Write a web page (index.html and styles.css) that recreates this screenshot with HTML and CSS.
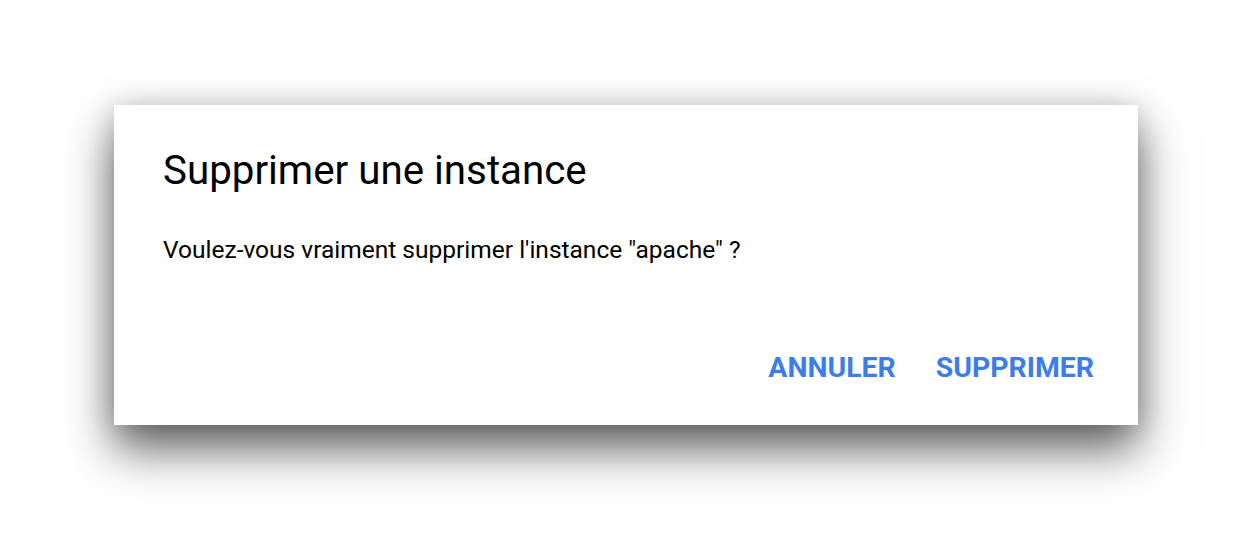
FILE: index.html
```html
<!DOCTYPE html>
<html lang="fr">
<head>
<meta charset="utf-8">
<link rel="stylesheet" href="styles.css">
</head>
<body>
<div class="stage">
  <div class="dialog">
    <h1 class="title">Supprimer une instance</h1>
    <p class="message">Voulez-vous vraiment supprimer l'instance "apache" ?</p>
    <div class="actions">
      <button class="btn">ANNULER</button>
      <button class="btn">SUPPRIMER</button>
    </div>
  </div>
</div>
</body>
</html>
```
FILE: styles.css
```css
html, body {
  margin: 0;
  padding: 0;
  background: #ffffff;
}
.stage {
  padding: 105px 0 0 114px;
  min-height: 544px;
  box-sizing: border-box;
}
.dialog {
  width: 1024px;
  height: 320px;
  box-sizing: border-box;
  background: #ffffff;
  box-shadow: 0 24px 44px rgba(0,0,0,0.62), 0 0 26px rgba(0,0,0,0.14);
  padding: 42px 44px 0 49px;
  display: flex;
  flex-direction: column;
  font-family: Roboto, "Liberation Sans", sans-serif;
  color: #000;
}
.title {
  margin: 0;
  font-size: 40.3px;
  font-weight: 400;
  line-height: 48px;
}
.message {
  margin: 39px 0 0;
  font-size: 24.5px;
  line-height: 32px;
}
.actions {
  display: flex;
  justify-content: flex-end;
  gap: 40px;
  margin-top: 86px;
}
.btn {
  border: 0;
  background: none;
  padding: 0;
  font-family: Roboto, "Liberation Sans", sans-serif;
  font-weight: 700;
  font-size: 28.4px;
  line-height: 32px;
  color: #3b7de9;
  cursor: pointer;
}
```
